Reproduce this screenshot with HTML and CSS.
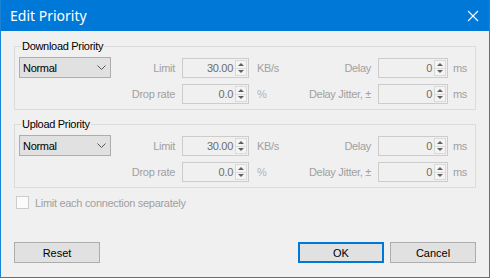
FILE: index.html
```html
<!DOCTYPE html>
<html lang="en">

<head>
    <meta charset="UTF-8">
    <title>Edit Priority</title>
    <link rel="stylesheet" href="styles.css">
</head>

<body>
    <div class="window">
        <!-- Title bar -->
        <div class="titlebar">
            <span class="title">Edit Priority</span>
            <svg class="close" width="12" height="12" viewBox="0 0 12 12">
                <path d="M1 1 L11 11 M11 1 L1 11" stroke="#fff" stroke-width="1.1" fill="none" />
            </svg>
        </div>

        <div class="client">
            <fieldset class="group">
                <legend>Download Priority</legend>
                <div class="grid">
                    <div class="select">
                        <span>Normal</span>
                        <svg width="9" height="6" viewBox="0 0 9 6"><path d="M0.5 0.5 L4.5 4.5 L8.5 0.5" stroke="#555" fill="none" /></svg>
                    </div>
                    <span class="label">Limit</span>
                    <div class="spin"><span class="value">30.00</span><span class="arrows"><i class="up"></i><i class="down"></i></span></div>
                    <span class="unit">KB/s</span>
                    <span class="label">Delay</span>
                    <div class="spin"><span class="value">0</span><span class="arrows"><i class="up"></i><i class="down"></i></span></div>
                    <span class="unit ms">ms</span>

                    <span></span>
                    <span class="label">Drop rate</span>
                    <div class="spin"><span class="value">0.0</span><span class="arrows"><i class="up"></i><i class="down"></i></span></div>
                    <span class="unit pct">%</span>
                    <span class="label">Delay Jitter, ±</span>
                    <div class="spin"><span class="value">0</span><span class="arrows"><i class="up"></i><i class="down"></i></span></div>
                    <span class="unit ms">ms</span>
                </div>
            </fieldset>

            <fieldset class="group">
                <legend>Upload Priority</legend>
                <div class="grid">
                    <div class="select">
                        <span>Normal</span>
                        <svg width="9" height="6" viewBox="0 0 9 6"><path d="M0.5 0.5 L4.5 4.5 L8.5 0.5" stroke="#555" fill="none" /></svg>
                    </div>
                    <span class="label">Limit</span>
                    <div class="spin"><span class="value">30.00</span><span class="arrows"><i class="up"></i><i class="down"></i></span></div>
                    <span class="unit">KB/s</span>
                    <span class="label">Delay</span>
                    <div class="spin"><span class="value">0</span><span class="arrows"><i class="up"></i><i class="down"></i></span></div>
                    <span class="unit ms">ms</span>

                    <span></span>
                    <span class="label">Drop rate</span>
                    <div class="spin"><span class="value">0.0</span><span class="arrows"><i class="up"></i><i class="down"></i></span></div>
                    <span class="unit pct">%</span>
                    <span class="label">Delay Jitter, ±</span>
                    <div class="spin"><span class="value">0</span><span class="arrows"><i class="up"></i><i class="down"></i></span></div>
                    <span class="unit ms">ms</span>
                </div>
            </fieldset>

            <label class="check">
                <span class="box"></span>
                <span>Limit each connection separately</span>
            </label>

            <!-- Bottom buttons -->
            <div class="footer">
                <button class="btn">Reset</button>
                <span class="spacer"></span>
                <button class="btn default">OK</button>
                <button class="btn">Cancel</button>
            </div>
        </div>
    </div>
</body>

</html>
```

FILE: styles.css
```css
* {
    box-sizing: border-box;
}

html,
body {
    margin: 0;
}

body {
    width: 490px;
    height: 278px;
    font-family: "Liberation Sans", Arial, sans-serif;
    font-size: 11px;
    letter-spacing: -0.3px;
    color: #000;
    background: #fff;
}

.window {
    width: 490px;
    height: 278px;
    border: 1px solid #1883d7;
    border-top: 0;
    background: #f0f0f0;
    display: flex;
    flex-direction: column;
}

.titlebar {
    height: 31px;
    flex: none;
    background: #0078d7;
    color: #fff;
    display: flex;
    align-items: center;
    justify-content: space-between;
    padding: 0 10px 0 9px;
}

.title {
    font-family: "Noto Sans", sans-serif;
    font-size: 14px;
    letter-spacing: 0;
}

.client {
    flex: 1;
    display: flex;
    flex-direction: column;
    padding: 9px 13px 14px;
}

.group {
    margin: 0;
    min-width: 0;
    border: 1px solid #dcdcdc;
    padding: 0 4px 4px;
}

.group + .group {
    margin-top: 8px;
}

.group legend {
    margin-left: 2px;
    padding: 0 1px;
    line-height: 13px;
}

.grid {
    display: grid;
    grid-template-columns: 92px 71px 67px 51px 78px 70px 1fr;
    grid-auto-rows: 22px;
    row-gap: 4px;
    align-items: center;
    margin-top: 4px;
}

.select {
    height: 21px;
    align-self: start;
    background: #e1e1e1;
    border: 1px solid #adadad;
    display: flex;
    align-items: center;
    justify-content: space-between;
    padding: 0 4px 0 3px;
}

.label {
    text-align: right;
    color: #a0a0a0;
    padding-right: 7px;
    white-space: nowrap;
}

.spin {
    height: 20px;
    border: 1px solid #cccccc;
    background: #f0f0f0;
    display: flex;
    align-items: stretch;
    padding: 1px;
}

.spin .value {
    flex: 1;
    text-align: right;
    color: #6d6d6d;
    line-height: 16px;
    padding-right: 2px;
}

.arrows {
    width: 12px;
    display: flex;
    flex-direction: column;
}

.arrows i {
    flex: 1;
    display: flex;
    align-items: center;
    justify-content: center;
    border: 1px solid #dadada;
    background: #f4f4f4;
}

.arrows i + i {
    border-top: 0;
}

.arrows i::after {
    content: "";
    border-left: 3px solid transparent;
    border-right: 3px solid transparent;
}

.arrows .up::after {
    border-bottom: 3px solid #606060;
}

.arrows .down::after {
    border-top: 3px solid #606060;
}

.unit {
    color: #a0a0a0;
    padding-left: 8px;
}

.unit.ms {
    padding-left: 5px;
}

.unit.pct {
    color: #b4b4b4;
}

.check {
    display: flex;
    align-items: center;
    gap: 6px;
    margin: 8px 0 0 2px;
    color: #a0a0a0;
}

.check .box {
    width: 13px;
    height: 13px;
    border: 1px solid #cccccc;
    background: #fbfbfb;
}

.footer {
    margin-top: auto;
    display: flex;
    gap: 6px;
}

.spacer {
    flex: 1;
}

.btn {
    width: 86px;
    height: 21px;
    font: inherit;
    color: #000;
    background: #e1e1e1;
    border: 1px solid #adadad;
    padding: 0;
}

.btn.default {
    border: 2px solid #0078d7;
}
```
